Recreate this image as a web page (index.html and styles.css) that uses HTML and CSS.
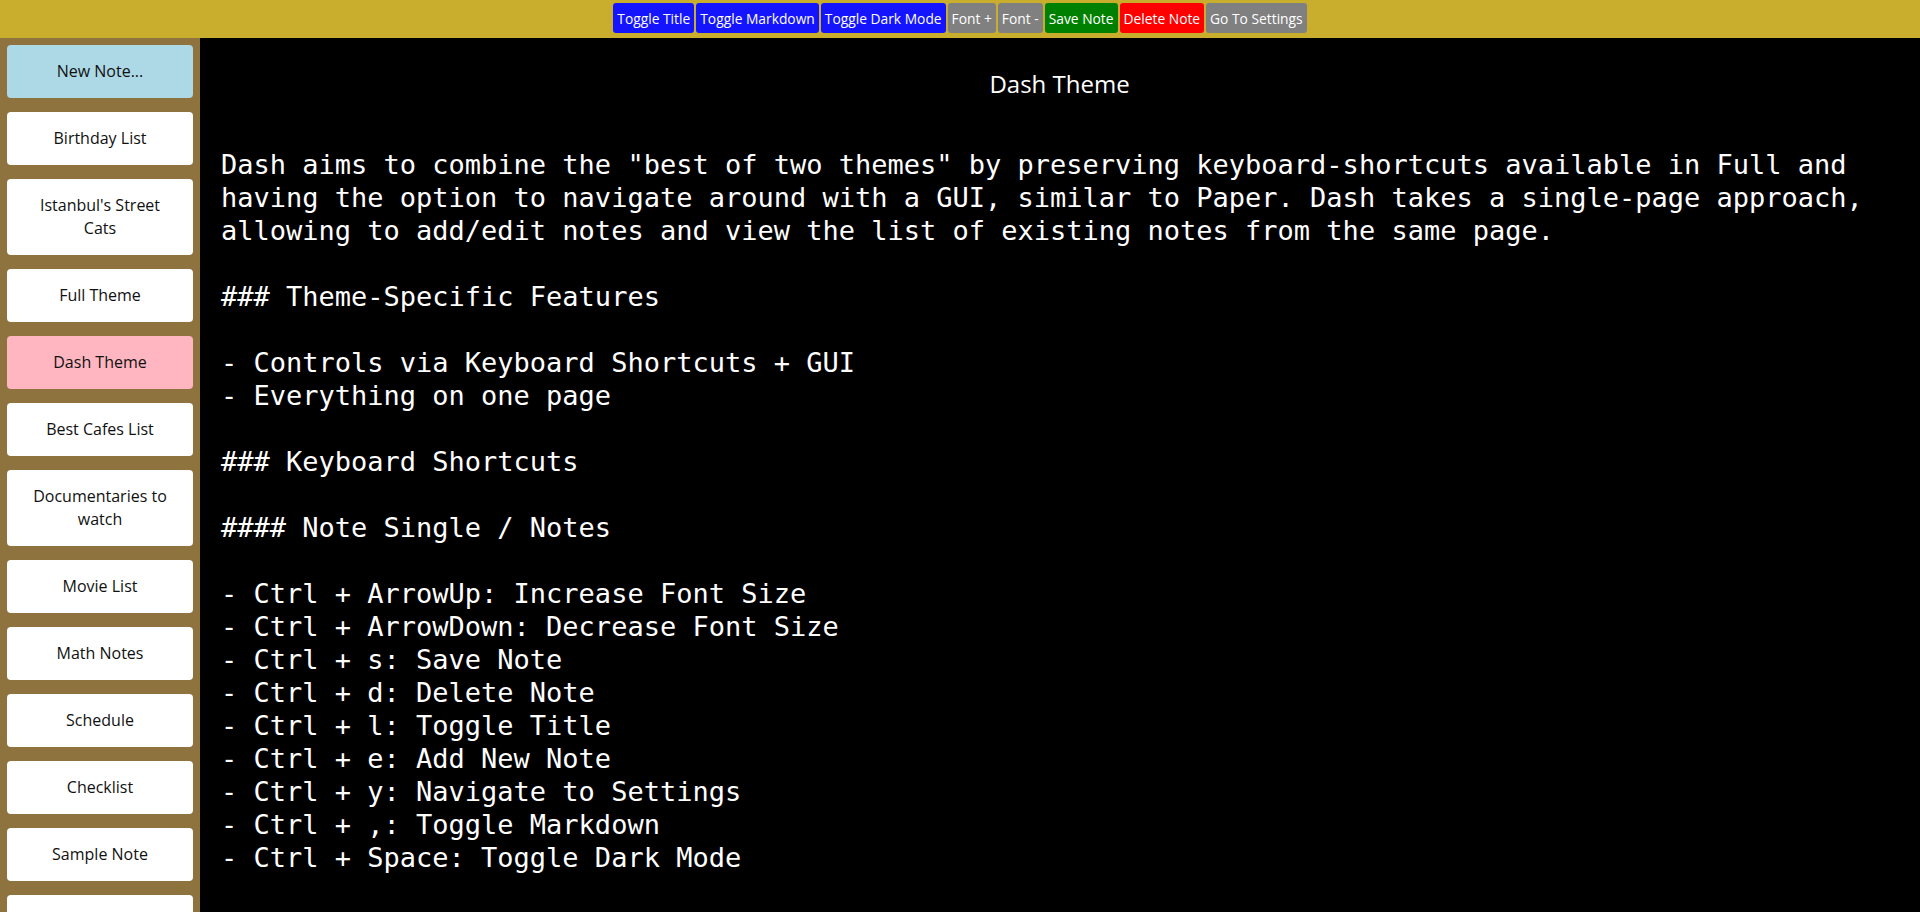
FILE: index.html
```html
<!DOCTYPE html>
<html lang="en">
<head>
<meta charset="utf-8">
<title>Dash Theme</title>
<link rel="stylesheet" href="styles.css">
</head>
<body>
<header class="topbar">
  <button class="btn btn-blue">Toggle Title</button>
  <button class="btn btn-blue">Toggle Markdown</button>
  <button class="btn btn-blue">Toggle Dark Mode</button>
  <button class="btn btn-gray">Font +</button>
  <button class="btn btn-gray">Font -</button>
  <button class="btn btn-green">Save Note</button>
  <button class="btn btn-red">Delete Note</button>
  <button class="btn btn-gray">Go To Settings</button>
</header>
<div class="layout">
  <nav class="sidebar">
    <div class="note-card new-note">New Note...</div>
    <div class="note-card">Birthday List</div>
    <div class="note-card">Istanbul's Street Cats</div>
    <div class="note-card">Full Theme</div>
    <div class="note-card active">Dash Theme</div>
    <div class="note-card">Best Cafes List</div>
    <div class="note-card">Documentaries to watch</div>
    <div class="note-card">Movie List</div>
    <div class="note-card">Math Notes</div>
    <div class="note-card">Schedule</div>
    <div class="note-card">Checklist</div>
    <div class="note-card">Sample Note</div>
    <div class="note-card">Groceries</div>
  </nav>
  <main class="editor">
    <h1 class="note-title">Dash Theme</h1>
    <div class="note-body">Dash aims to combine the "best of two themes" by preserving keyboard-shortcuts available in Full and having the option to navigate around with a GUI, similar to Paper. Dash takes a single-page approach, allowing to add/edit notes and view the list of existing notes from the same page.

### Theme-Specific Features

- Controls via Keyboard Shortcuts + GUI
- Everything on one page

### Keyboard Shortcuts

#### Note Single / Notes

- Ctrl + ArrowUp: Increase Font Size
- Ctrl + ArrowDown: Decrease Font Size
- Ctrl + s: Save Note
- Ctrl + d: Delete Note
- Ctrl + l: Toggle Title
- Ctrl + e: Add New Note
- Ctrl + y: Navigate to Settings
- Ctrl + ,: Toggle Markdown
- Ctrl + Space: Toggle Dark Mode</div>
  </main>
</div>
</body>
</html>
```
FILE: styles.css
```css
* { box-sizing: border-box; }
html, body { margin: 0; padding: 0; height: 100%; }
body {
  display: flex;
  flex-direction: column;
  overflow: hidden;
  font-family: "Open Sans", "Noto Sans", sans-serif;
  background: #000;
}
.topbar {
  height: 38px;
  flex: none;
  background: #c9ae2d;
  display: flex;
  justify-content: center;
  align-items: flex-start;
  padding-top: 3px;
  gap: 2px;
}
.btn {
  height: 30px;
  padding: 0 4px;
  border: none;
  border-radius: 3px;
  color: #fff;
  font-family: "Open Sans", "Noto Sans", sans-serif;
  font-size: 13.8px;
  cursor: pointer;
}
.btn-blue { background: #1414ff; }
.btn-gray { background: #808080; }
.btn-green { background: #008000; }
.btn-red { background: #ff0000; }

.layout {
  flex: 1;
  display: flex;
  min-height: 0;
}
.sidebar {
  width: 200px;
  flex: none;
  background: #8f733f;
  display: flex;
  flex-direction: column;
  overflow: hidden;
}
.note-card {
  flex: none;
  margin: 7px;
  padding: 15px 16px;
  background: #fff;
  border-radius: 4px;
  text-align: center;
  font-size: 16px;
  line-height: 23px;
  color: #111;
}
.note-card.new-note { background: #add8e6; }
.note-card.active { background: #ffb6c1; }

.editor {
  flex: 1;
  background: #000;
  color: #fff;
  padding: 0 22px 0 21px;
  overflow: hidden;
}
.note-title {
  margin: 0;
  padding-top: 30px;
  height: 110px;
  text-align: center;
  font-weight: normal;
  font-size: 24px;
  line-height: 32px;
}
.note-body {
  font-family: "DejaVu Sans Mono", monospace;
  font-size: 27px;
  line-height: 33px;
  white-space: pre-wrap;
}
```
